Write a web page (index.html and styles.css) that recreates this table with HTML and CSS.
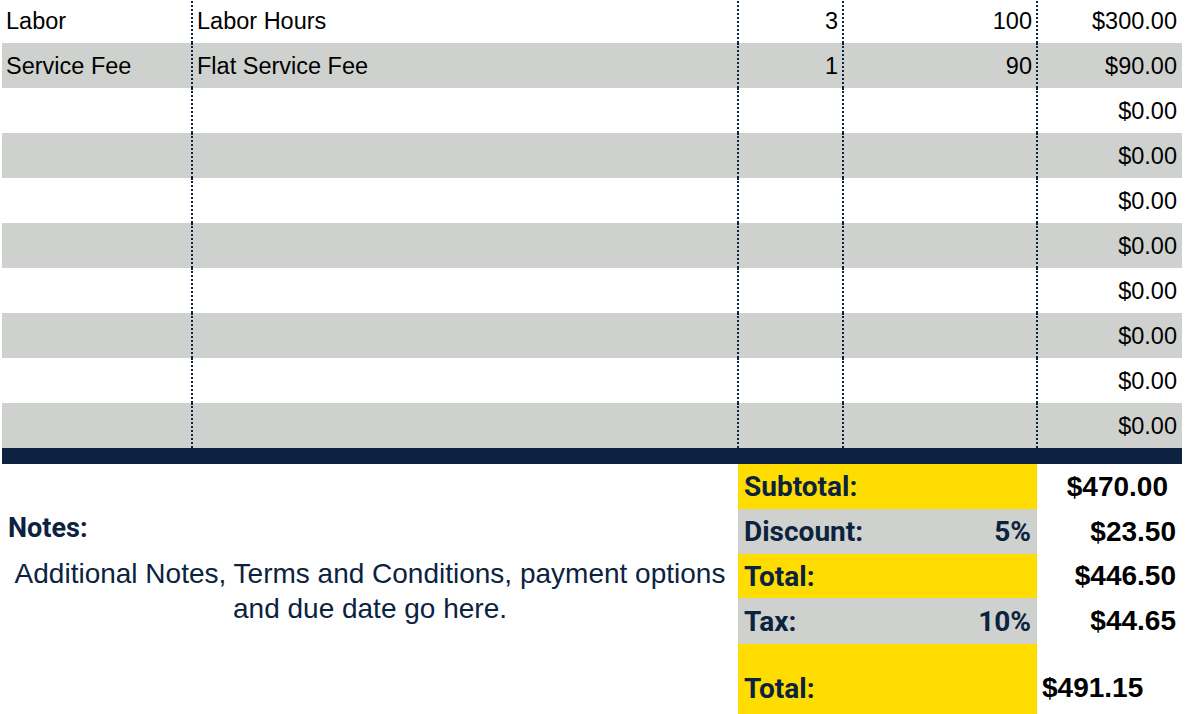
FILE: index.html
```html
<!DOCTYPE html>
<html>
<head>
<meta charset="utf-8">
<link rel="stylesheet" href="styles.css">
</head>
<body>
<div class="sheet">
  <div class="items">
    <div class="row">
      <div class="cell">Labor</div>
      <div class="cell sep">Labor Hours</div>
      <div class="cell sep num">3</div>
      <div class="cell sep num">100</div>
      <div class="cell sep num amt">$300.00</div>
    </div>
    <div class="row alt">
      <div class="cell">Service Fee</div>
      <div class="cell sep">Flat Service Fee</div>
      <div class="cell sep num">1</div>
      <div class="cell sep num">90</div>
      <div class="cell sep num amt">$90.00</div>
    </div>
    <div class="row"><div class="cell"></div><div class="cell sep"></div><div class="cell sep"></div><div class="cell sep"></div><div class="cell sep num amt">$0.00</div></div>
    <div class="row alt"><div class="cell"></div><div class="cell sep"></div><div class="cell sep"></div><div class="cell sep"></div><div class="cell sep num amt">$0.00</div></div>
    <div class="row"><div class="cell"></div><div class="cell sep"></div><div class="cell sep"></div><div class="cell sep"></div><div class="cell sep num amt">$0.00</div></div>
    <div class="row alt"><div class="cell"></div><div class="cell sep"></div><div class="cell sep"></div><div class="cell sep"></div><div class="cell sep num amt">$0.00</div></div>
    <div class="row"><div class="cell"></div><div class="cell sep"></div><div class="cell sep"></div><div class="cell sep"></div><div class="cell sep num amt">$0.00</div></div>
    <div class="row alt"><div class="cell"></div><div class="cell sep"></div><div class="cell sep"></div><div class="cell sep"></div><div class="cell sep num amt">$0.00</div></div>
    <div class="row"><div class="cell"></div><div class="cell sep"></div><div class="cell sep"></div><div class="cell sep"></div><div class="cell sep num amt">$0.00</div></div>
    <div class="row alt"><div class="cell"></div><div class="cell sep"></div><div class="cell sep"></div><div class="cell sep"></div><div class="cell sep num amt">$0.00</div></div>
  </div>
  <div class="bar"></div>
  <div class="summary">
    <div class="notes">
      <div class="notes-title">Notes:</div>
      <p class="notes-text">Additional Notes, Terms and Conditions, payment options<br>and due date go here.</p>
    </div>
    <div class="label yellow r1">Subtotal:</div>
    <div class="pct yellow r1"></div>
    <div class="value r1 centered">$470.00</div>

    <div class="label gray r2">Discount:</div>
    <div class="pct gray r2">5%</div>
    <div class="value r2">$23.50</div>

    <div class="label yellow r3">Total:</div>
    <div class="pct yellow r3"></div>
    <div class="value r3">$446.50</div>

    <div class="label gray r4">Tax:</div>
    <div class="pct gray r4">10%</div>
    <div class="value r4">$44.65</div>

    <div class="label yellow r5">Total:</div>
    <div class="pct yellow r5"></div>
    <div class="value r5 grand">$491.15</div>
  </div>
</div>
</body>
</html>
```

FILE: styles.css
```css
html, body {
  margin: 0;
  padding: 0;
  background: #ffffff;
  overflow: hidden;
}

.sheet {
  width: 1180px;
  margin-left: 2px;
  margin-top: -2px;
  font-family: "Liberation Sans", Arial, sans-serif;
  color: #000;
}

.row {
  display: grid;
  grid-template-columns: 189px 546px 105px 194px 146px;
  height: 45px;
}

.row.alt {
  background: #cfd1ce;
}

.cell {
  box-sizing: border-box;
  display: flex;
  align-items: center;
  padding: 1px 4px 0;
  font-size: 23.5px;
  white-space: nowrap;
}

.cell.sep {
  border-left: 2px dotted #0c2340;
}

.cell.num {
  justify-content: flex-end;
}

.cell.amt {
  padding-right: 5px;
}

.bar {
  height: 16px;
  background: #0d2240;
}

.summary {
  display: grid;
  grid-template-columns: 736px 210px 89px 145px;
  grid-template-rows: 45px 45px 44px 46px 88px;
}

.notes {
  grid-column: 1;
  grid-row: 1 / span 5;
  padding-top: 48px;
}

.notes-title {
  font-family: Roboto, "DejaVu Sans Condensed", sans-serif;
  font-weight: bold;
  font-size: 27px;
  line-height: 33px;
  color: #0c2340;
  padding-left: 6px;
}

.notes-text {
  margin: 11px 0 0;
  text-align: center;
  font-size: 28px;
  line-height: 35px;
  color: #0c2340;
  white-space: nowrap;
}

.label, .pct {
  display: flex;
  align-items: center;
  font-family: Roboto, "DejaVu Sans Condensed", sans-serif;
  font-weight: bold;
  font-size: 28px;
  color: #0c2340;
}

.label {
  grid-column: 2;
  padding-left: 6px;
}

.pct {
  grid-column: 3;
  justify-content: flex-end;
  padding-right: 6px;
}

.yellow { background: #ffdd00; }
.gray { background: #cfd1ce; }

.value {
  grid-column: 4;
  display: flex;
  align-items: center;
  justify-content: flex-end;
  padding-right: 6px;
  font-size: 28px;
  font-weight: bold;
}

.value.centered {
  padding-right: 14px;
}

.value.grand {
  justify-content: flex-start;
  padding-left: 5px;
}

.r1 { grid-row: 1; }
.r2 { grid-row: 2; }
.r3 { grid-row: 3; }
.r4 { grid-row: 4; }
.r5 { grid-row: 5; }
```
